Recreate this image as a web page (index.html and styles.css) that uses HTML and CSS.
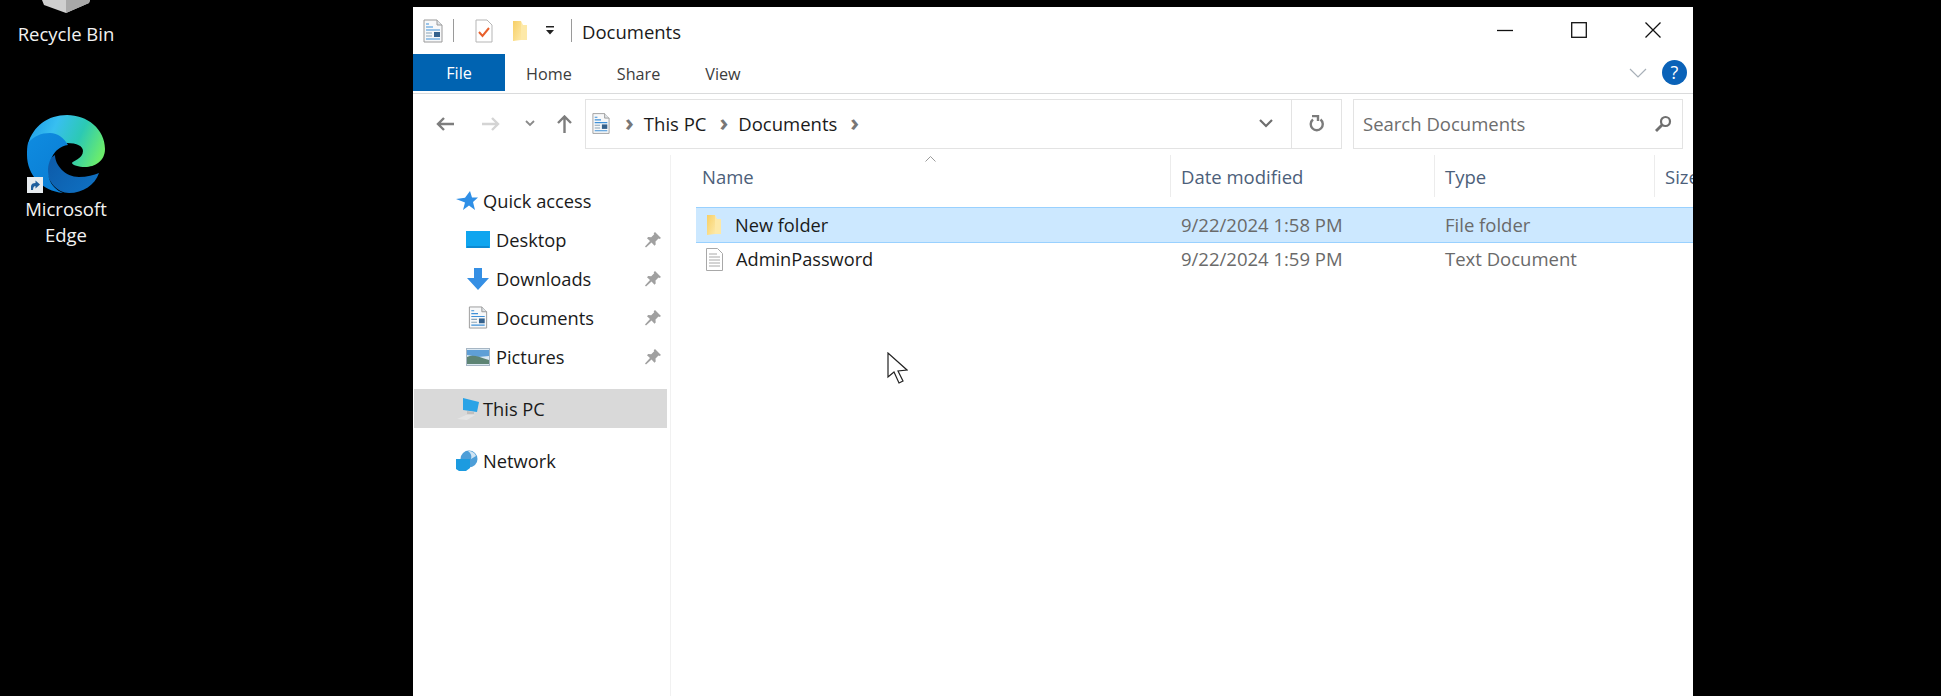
FILE: index.html
```html
<!DOCTYPE html>
<html>
<head>
    <title>Documents</title>
    <link rel="stylesheet" href="styles.css">
</head>
<body>
    <svg width="0" height="0" class="defs">
        <defs>
            <linearGradient id="edgeTop" x1="0" y1="0.3" x2="1" y2="0.6">
                <stop offset="0" stop-color="#1f9fea"/>
                <stop offset="0.3" stop-color="#38bff0"/>
                <stop offset="0.65" stop-color="#2cc9b4"/>
                <stop offset="1" stop-color="#6bec6c"/>
            </linearGradient>
            <linearGradient id="edgeLeft" x1="0" y1="0" x2="0.7" y2="1">
                <stop offset="0" stop-color="#0f8ce0"/>
                <stop offset="1" stop-color="#0a7dd4"/>
            </linearGradient>
            <linearGradient id="edgeLow" x1="0" y1="0" x2="1" y2="0.6">
                <stop offset="0" stop-color="#0d5aa8"/>
                <stop offset="1" stop-color="#0f6fc0"/>
            </linearGradient>
            <linearGradient id="folderFill" x1="0" y1="0" x2="1" y2="1">
                <stop offset="0" stop-color="#f7cf66"/>
                <stop offset="1" stop-color="#fde9a8"/>
            </linearGradient>
            <symbol id="docIcon" viewBox="0 0 20 24">
                <path d="M1 1h13l5 5v17H1z" fill="#f7f8f9" stroke="#9a9a9a"/>
                <path d="M14 1v5h5" fill="#dfe3e6" stroke="#9a9a9a"/>
                <path d="M3 5h3M3 8h7M3 11h14M3 20h14" stroke="#3f90d8" stroke-width="1.2"/>
                <path d="M3 14h6M3 17h6" stroke="#8aa4b8" stroke-width="1.2"/>
                <rect x="11" y="13" width="6" height="5" fill="#35618c"/>
            </symbol>
            <symbol id="folderIcon" viewBox="0 0 16 22">
                <path d="M1 1h8l2 4h4v15H3l-2 1z" fill="#fde9a8"/>
                <path d="M1 1h8v19l-8 1z" fill="url(#folderFill)"/>
            </symbol>
            <symbol id="pinIcon" viewBox="0 0 16 16">
                <path d="M10 0l6 6-1.500 1-1-.5-3 3 .2 3L9.500 13.700 6.500 10.500 1 15.500 0 14.500 5 9 2 6.300 3.200 5l3 .2 3-3-.5-1z" fill="#a0a0a0"/>
            </symbol>
        </defs>
    </svg>

    <div class="desktop-icon recycle">
        <svg class="bin" width="50" height="13" viewBox="0 0 50 13">
            <path d="M1 0h48l-1 3L25 13 3 5z" fill="#cfcfcf"/>
            <path d="M25 13L48 3l1-3H25z" fill="#a9a9a9"/>
        </svg>
        <span class="desktop-label">Recycle Bin</span>
    </div>

    <div class="desktop-icon edge">
        <div class="edge-logo">
            <svg width="78" height="78" viewBox="0 0 78 78">
                <path fill="url(#edgeTop)" d="M1 29C6 11 21 0 40 0C60 0 78 14 78 34C78 46 68 52 58 52C52 52 45 50 45 48C45 46 56 44 56 36C56 31 50 28 40 28z"/>
                <path fill="url(#edgeLow)" d="M28 40C28 50 38 62 52 62C60 62 67 60 72 58C68 70 56 78 42 78C30 78 20 66 20 54C20 48 23 43 28 40z"/>
                <path fill="url(#edgeLeft)" d="M1 28C7 21 14 18 23 18C31 18 37 23 41 30C33 31 28 36 25 42C21 48 20 54 22 63C24 70 29 75 36 78C15 76 0 60 0 40C0 35 0 32 1 28z"/>
            </svg>
            <svg class="shortcut" width="16" height="16" viewBox="0 0 16 16">
                <rect width="16" height="16" fill="#e8ecef"/>
                <path d="M4 13V9.500C4 7 6 6 8.500 6V3.500L13 7.500l-4.500 4V9C7 9 6.200 10 6 13z" fill="#1f5f9e"/>
            </svg>
        </div>
        <span class="desktop-label">Microsoft<br>Edge</span>
    </div>

    <div class="window">
        <div class="titlebar">
            <svg class="t-doc" width="20" height="26"><use href="#docIcon"/></svg>
            <span class="t-sep"></span>
            <svg class="t-check" width="18" height="24" viewBox="0 0 18 24">
                <path d="M1 1h11l5 5v17H1z" fill="#fff" stroke="#b5b5b5"/>
                <path d="M4 13l3.500 4L14 9" fill="none" stroke="#e8602c" stroke-width="2"/>
            </svg>
            <svg class="t-folder" width="16" height="22"><use href="#folderIcon"/></svg>
            <svg class="t-drop" width="10" height="9" viewBox="0 0 10 9">
                <path d="M1 0h8v1.500H1zM1 4h8L5 8.500z" fill="#222"/>
            </svg>
            <span class="t-sep t-sep2"></span>
            <span class="t-title">Documents</span>
            <div class="win-btns">
                <svg width="16" height="16" viewBox="0 0 16 16"><path d="M0 8.500h16" stroke="#111" stroke-width="1.300"/></svg>
                <svg width="16" height="16" viewBox="0 0 16 16"><rect x="0.700" y="0.700" width="14.600" height="14.600" fill="none" stroke="#111" stroke-width="1.300"/></svg>
                <svg width="16" height="16" viewBox="0 0 16 16"><path d="M0.500 0.500l15 15M15.500 0.500l-15 15" stroke="#111" stroke-width="1.300"/></svg>
            </div>
        </div>

        <div class="ribbon">
            <span class="tab tab-file">File</span>
            <span class="tab tab-home">Home</span>
            <span class="tab tab-share">Share</span>
            <span class="tab tab-view">View</span>
            <svg class="rib-chevron" width="18" height="10" viewBox="0 0 18 10"><path d="M1 1l8 8 8-8" fill="none" stroke="#a8b0b8" stroke-width="1.200"/></svg>
            <span class="help">?</span>
        </div>

        <div class="navbar">
            <svg class="nav-arrow" width="18" height="14" viewBox="0 0 18 14"><path d="M8 1L2 7l6 6M2 7h16" fill="none" stroke="#7d7d7d" stroke-width="2.400"/></svg>
            <svg class="nav-arrow nav-fwd" width="18" height="14" viewBox="0 0 18 14"><path d="M10 1l6 6-6 6M16 7H0" fill="none" stroke="#d4d4d4" stroke-width="2.400"/></svg>
            <svg class="nav-down" width="10" height="7" viewBox="0 0 10 7"><path d="M1 1l4 4 4-4" fill="none" stroke="#8a8a8a" stroke-width="1.800"/></svg>
            <svg class="nav-up" width="15" height="18" viewBox="0 0 15 18"><path d="M1 8l6.500-6.500L14 8M7.500 2v16" fill="none" stroke="#7d7d7d" stroke-width="2.400"/></svg>
            <div class="address">
                <svg class="addr-doc" width="18" height="23"><use href="#docIcon"/></svg>
                <span class="crumb-arrow">&#8250;</span>
                <span class="crumb">This PC</span>
                <span class="crumb-arrow">&#8250;</span>
                <span class="crumb">Documents</span>
                <span class="crumb-arrow">&#8250;</span>
                <svg class="addr-drop" width="14" height="9" viewBox="0 0 14 9"><path d="M1 1l6 6 6-6" fill="none" stroke="#6e6e6e" stroke-width="2.200"/></svg>
                <span class="addr-refresh">
                    <svg width="16" height="18" viewBox="0 0 16 18"><path d="M3 1h6v5M11.500 4.500A6 6 0 1 1 4 4.500" fill="none" stroke="#7b7b7b" stroke-width="2.400"/></svg>
                </span>
            </div>
            <div class="search">
                <span class="search-text">Search Documents</span>
                <svg width="18" height="18" viewBox="0 0 18 18"><circle cx="11.500" cy="6.500" r="4.500" fill="none" stroke="#6f6f6f" stroke-width="2.200"/><path d="M8 10l-6 6" stroke="#6f6f6f" stroke-width="2.800"/></svg>
            </div>
        </div>

        <div class="body">
            <div class="sidebar">
                <div class="side-item top">
                    <svg class="side-icon" width="22" height="20" viewBox="0 0 22 20"><path d="M14 0l2 6.500h6l-5 4.500L19 19l-6-4.500L7 19l2-7.500L0 8l9-1.300z" fill="#2f8fe6"/></svg>
                    <span>Quick access</span>
                </div>
                <div class="side-item sub">
                    <svg class="side-icon" width="24" height="17" viewBox="0 0 24 17"><rect width="24" height="17" fill="#0fa5ef"/><path d="M1 16h22" stroke="#0a6fb5"/></svg>
                    <span>Desktop</span>
                    <svg class="pin" width="16" height="16"><use href="#pinIcon"/></svg>
                </div>
                <div class="side-item sub">
                    <svg class="side-icon" width="22" height="22" viewBox="0 0 22 22"><path d="M7 0h8v10h7L11 22 0 10h7z" fill="#358fe4"/></svg>
                    <span>Downloads</span>
                    <svg class="pin" width="16" height="16"><use href="#pinIcon"/></svg>
                </div>
                <div class="side-item sub">
                    <svg class="side-icon side-doc" width="18" height="23"><use href="#docIcon"/></svg>
                    <span>Documents</span>
                    <svg class="pin" width="16" height="16"><use href="#pinIcon"/></svg>
                </div>
                <div class="side-item sub">
                    <svg class="side-icon" width="24" height="18" viewBox="0 0 24 18"><rect x="0.500" y="0.500" width="23" height="17" fill="#dbe8f2" stroke="#a6b6c4"/><path d="M1 2h22v6L12 9 1 7z" fill="#5f9fd6"/><path d="M1 9c6-3 12 0 22 3v4H1z" fill="#5d8474"/></svg>
                    <span>Pictures</span>
                    <svg class="pin" width="16" height="16"><use href="#pinIcon"/></svg>
                </div>
                <div class="side-item top selected">
                    <svg class="side-icon" width="24" height="22" viewBox="0 0 24 22"><path d="M7 0l16 4-2 10-14-2z" fill="#2aa3e6"/><path d="M11 13v3h7v-2z" fill="#bfbfbf"/><path d="M1 21l9-4h9l-8 5z" fill="#e4e4e4"/></svg>
                    <span>This PC</span>
                </div>
                <div class="side-item top network">
                    <svg class="side-icon" width="22" height="22" viewBox="0 0 22 22"><circle cx="13" cy="9" r="8.500" fill="#4d9ed8"/><path d="M12 1c3 2 4 5 3 8l5-3c-1-3-4-5-8-5z" fill="#cfe3f2"/><path d="M0 9h14v9l-4 3H3l-3-2z" fill="#1c9be0"/></svg>
                    <span>Network</span>
                </div>
            </div>

            <div class="files">
                <div class="sort-caret">
                    <svg width="11" height="6" viewBox="0 0 11 6"><path d="M0.500 5.500l5-5 5 5" fill="none" stroke="#9a9a9a"/></svg>
                </div>
                <div class="grid head">
                    <span class="col-name">Name</span>
                    <span>Date modified</span>
                    <span>Type</span>
                    <span>Size</span>
                </div>
                <div class="grid row row-selected">
                    <span class="file-name">
                        <svg width="16" height="22"><use href="#folderIcon"/></svg>
                        <b>New folder</b>
                    </span>
                    <span>9/22/2024 1:58 PM</span>
                    <span>File folder</span>
                    <span></span>
                </div>
                <div class="grid row">
                    <span class="file-name">
                        <svg width="17" height="23" viewBox="0 0 17 23"><path d="M0.500 0.500h11l5 5v17H0.500z" fill="#fff" stroke="#a8a8a8"/><path d="M3 6h8M3 9h11M3 12h11M3 15h11M3 18h11" stroke="#a8a8a8"/></svg>
                        <b>AdminPassword</b>
                    </span>
                    <span>9/22/2024 1:59 PM</span>
                    <span>Text Document</span>
                    <span></span>
                </div>
            </div>
        </div>
    </div>

    <svg class="cursor" width="21" height="32" viewBox="0 0 21 32">
        <path d="M1 1v24l6-5 5 11 4-2-5-10 9-1z" fill="#fff" stroke="#222" stroke-width="1.200"/>
    </svg>
</body>
</html>
```

FILE: styles.css
```css
* {
    box-sizing: border-box;
}

html, body {
    margin: 0;
    height: 100%;
}

body {
    position: relative;
    overflow: hidden;
    background-color: #000;
    font-family: "Open Sans", "Noto Sans", sans-serif;
    font-size: 18px;
    color: #1a1a1a;
}

.defs {
    position: absolute;
}

/* desktop */
.desktop-icon {
    position: absolute;
    width: 132px;
    left: 0;
    display: flex;
    flex-direction: column;
    align-items: center;
}

.recycle {
    top: 0;
}

.bin {
    margin-bottom: 8px;
}

.edge {
    top: 115px;
}

.edge-logo {
    position: relative;
    width: 78px;
    height: 78px;
    margin-bottom: 3px;
}

.edge-logo svg {
    display: block;
}

.shortcut {
    position: absolute;
    left: 0;
    bottom: 0;
}

.desktop-label {
    color: #f2f2f2;
    font-size: 18.500px;
    line-height: 26px;
    text-align: center;
}

/* window */
.window {
    position: absolute;
    left: 413px;
    top: 7px;
    width: 1280px;
    height: 689px;
    background-color: #fff;
    display: flex;
    flex-direction: column;
    overflow: hidden;
}

.titlebar {
    height: 47px;
    flex: none;
    display: flex;
    align-items: center;
    padding-left: 10px;
}

.t-sep {
    width: 1px;
    height: 23px;
    margin-left: 10px;
    background-color: #9a9a9a;
}

.t-check {
    margin-left: 21px;
}

.t-folder {
    margin-left: 19px;
}

.t-drop {
    margin-left: 17px;
}

.t-sep2 {
    margin-left: 16px;
}

.t-title {
    margin-left: 10px;
    margin-top: 2px;
    font-size: 18.500px;
}

.win-btns {
    margin-left: auto;
    display: flex;
    gap: 58px;
    padding-right: 32px;
    margin-top: -1px;
}

.ribbon {
    height: 40px;
    flex: none;
    display: flex;
    align-items: stretch;
    border-bottom: 1px solid #dadbdc;
    padding-bottom: 2px;
}

.tab {
    display: flex;
    align-items: center;
    padding-top: 2px;
    font-size: 16.200px;
    color: #3c3c3c;
}

.tab-file {
    width: 92px;
    justify-content: center;
    padding-top: 0;
    background-color: #0063b1;
    color: #fff;
}

.tab-home {
    margin-left: 21px;
}

.tab-share {
    margin-left: 45px;
}

.tab-view {
    margin-left: 45px;
}

.rib-chevron {
    margin-left: auto;
    align-self: center;
    margin-right: 14px;
}

.help {
    align-self: center;
    width: 25px;
    height: 25px;
    margin-right: 6px;
    margin-left: 1px;
    border-radius: 50%;
    background-color: #0a62b8;
    color: #fff;
    font-size: 18px;
    line-height: 25px;
    text-align: center;
}

.navbar {
    height: 61px;
    flex: none;
    display: flex;
    align-items: center;
    padding: 0 9px 2px 23px;
}

.nav-fwd {
    margin-left: 28px;
}

.nav-down {
    margin-left: 25px;
}

.nav-up {
    margin-left: 22px;
}

.address {
    margin-left: 13px;
    width: 757px;
    height: 50px;
    display: flex;
    align-items: center;
    border: 1px solid #e3e3e3;
    padding-left: 6px;
}

.crumb {
    font-size: 18.500px;
}

.crumb-arrow {
    margin: -4px 10px 0 15px;
    font-size: 24px;
    font-weight: 700;
    color: #777;
}

.crumb + .crumb-arrow {
    margin-left: 13px;
}

.addr-drop {
    margin-left: auto;
    margin-right: 18px;
}

.addr-refresh {
    width: 50px;
    height: 100%;
    display: flex;
    align-items: center;
    justify-content: center;
    border-left: 1px solid #e3e3e3;
}

.search {
    margin-left: 11px;
    width: 330px;
    height: 50px;
    display: flex;
    align-items: center;
    justify-content: space-between;
    border: 1px solid #e3e3e3;
    padding: 0 10px 0 9px;
    color: #6d6d6d;
}

.search-text {
    font-size: 18.500px;
}

/* lower part */
.body {
    flex: 1;
    display: flex;
    min-height: 0;
}

.sidebar {
    width: 258px;
    flex: none;
    padding: 26px 3px 0 1px;
    border-right: 1px solid #f1f1f1;
}

.side-item {
    height: 39px;
    display: flex;
    align-items: center;
    font-size: 18.300px;
}

.side-item.top {
    padding-left: 42px;
}

.side-item.top .side-icon {
    margin-right: 5px;
}

.side-item.top.selected .side-icon {
    margin-right: 3px;
}

.side-item.sub {
    padding-left: 52px;
}

.side-item.sub .side-icon {
    margin-right: 6px;
    width: 24px;
}

.side-icon {
    flex: none;
}

.pin {
    margin-left: auto;
    margin-right: 6px;
}

.selected {
    margin-top: 13px;
    background-color: #d9d9d9;
}

.network {
    margin-top: 13px;
}

.files {
    flex: 1;
    padding-left: 25px;
    position: relative;
}

.sort-caret {
    position: absolute;
    left: 254px;
    top: 0;
    line-height: 0;
}

.grid {
    display: grid;
    grid-template-columns: 474px 264px 220px 100px;
}

.head {
    height: 42px;
    align-items: center;
    color: #4c607a;
    font-size: 18.500px;
    margin-bottom: 10px;
}

.head span {
    height: 100%;
    display: flex;
    align-items: center;
    padding-left: 10px;
    border-left: 1px solid #ececec;
}

.head .col-name {
    padding-left: 6px;
    border-left: none;
}

.row {
    height: 32px;
    align-items: center;
    color: #6a6a6a;
    font-size: 18.500px;
}

.row > span:not(.file-name) {
    padding-left: 11px;
    padding-bottom: 1px;
}

.row-selected {
    height: 36px;
    background-color: #cce8ff;
    border-top: 1px solid #99d1ff;
    border-bottom: 1px solid #99d1ff;
}

.file-name {
    display: flex;
    align-items: center;
    gap: 13px;
    padding-left: 10px;
}

.file-name b {
    font-weight: 400;
    color: #1a1a1a;
    font-size: 18.200px;
}

.cursor {
    position: absolute;
    left: 887px;
    top: 352px;
}
```
